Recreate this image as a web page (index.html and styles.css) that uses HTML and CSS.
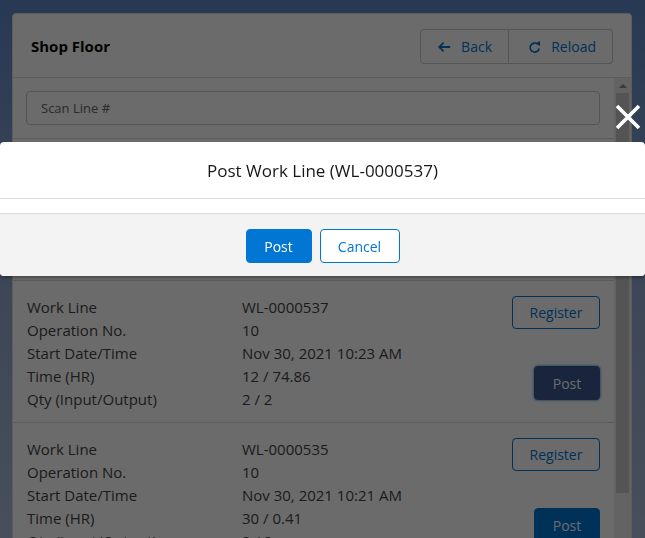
FILE: index.html
```html
<!DOCTYPE html>
<html lang="en">

<head>
    <meta charset="UTF-8">
    <meta name="viewport" content="width=device-width, initial-scale=1.0">
    <title>Shop Floor</title>
    <link rel="stylesheet" href="styles.css">
</head>

<body>
    <div class="page">
        <div class="card">
            <div class="card-header">
                <h2 class="card-title">Shop Floor</h2>
                <div class="btn-group">
                    <button class="btn-neutral btn-back">
                        <svg class="btn-icon" viewBox="0 0 16 16" width="16" height="16">
                            <path d="M15 8H2.5M7.5 3L2.5 8l5 5" />
                        </svg>
                        Back
                    </button>
                    <button class="btn-neutral btn-reload">
                        <svg class="btn-icon" viewBox="0 0 16 16" width="16" height="16">
                            <path d="M11.4 4.3A5.5 5.5 0 1 0 13.5 9.8" />
                            <polygon class="fill" points="8.6,3.9 14.6,0.6 14.6,6.9" />
                        </svg>
                        Reload
                    </button>
                </div>
            </div>

            <div class="card-body">
                <div class="list">
                    <div class="scan">
                        <input type="text" class="scan-input" placeholder="Scan Line #">
                    </div>

                    <!-- Work lines -->
                    <div class="line-item">
                        <dl class="fields">
                            <dt>Work Line</dt><dd>WL-0000538</dd>
                            <dt>Operation No.</dt><dd>10</dd>
                            <dt>Start Date/Time</dt><dd>Nov 30, 2021 10:25 AM</dd>
                            <dt>Time (HR)</dt><dd>4 / 0.12</dd>
                            <dt>Qty (Input/Output)</dt><dd>1 / 1</dd>
                        </dl>
                        <div class="actions">
                            <button class="btn-outline">Register</button>
                            <button class="btn-brand">Post</button>
                        </div>
                    </div>

                    <div class="line-item">
                        <dl class="fields">
                            <dt>Work Line</dt><dd>WL-0000537</dd>
                            <dt>Operation No.</dt><dd>10</dd>
                            <dt>Start Date/Time</dt><dd>Nov 30, 2021 10:23 AM</dd>
                            <dt>Time (HR)</dt><dd>12 / 74.86</dd>
                            <dt>Qty (Input/Output)</dt><dd>2 / 2</dd>
                        </dl>
                        <div class="actions">
                            <button class="btn-outline">Register</button>
                            <button class="btn-brand is-active">Post</button>
                        </div>
                    </div>

                    <div class="line-item">
                        <dl class="fields">
                            <dt>Work Line</dt><dd>WL-0000535</dd>
                            <dt>Operation No.</dt><dd>10</dd>
                            <dt>Start Date/Time</dt><dd>Nov 30, 2021 10:21 AM</dd>
                            <dt>Time (HR)</dt><dd>30 / 0.41</dd>
                            <dt>Qty (Input/Output)</dt><dd>2 / 2</dd>
                        </dl>
                        <div class="actions">
                            <button class="btn-outline">Register</button>
                            <button class="btn-brand">Post</button>
                        </div>
                    </div>
                </div>

                <div class="scrollbar">
                    <span class="scroll-arrow"></span>
                    <span class="scroll-thumb"></span>
                </div>
            </div>
        </div>
    </div>

    <!-- Post confirmation dialog -->
    <div class="backdrop"></div>
    <section class="modal">
        <button class="modal-close" title="Close">
            <svg viewBox="0 0 26 26" width="26" height="26">
                <path d="M2 2L24 24M24 2L2 24" />
            </svg>
        </button>
        <header class="modal-header">
            <h2>Post Work Line (WL-0000537)</h2>
        </header>
        <div class="modal-content"></div>
        <footer class="modal-footer">
            <button class="btn-brand">Post</button>
            <button class="btn-cancel">Cancel</button>
        </footer>
    </section>
</body>

</html>
```

FILE: styles.css
```css
body {
    font-family: "Open Sans", Arial, sans-serif;
    font-size: 14px;
    margin: 0;
    height: 538px;
    overflow: hidden;
    background: linear-gradient(180deg, #5e88c6 0%, #8aa3cc 40%, #adbcd8 100%);
    color: #3e3e3c;
}

button {
    font-family: inherit;
    font-size: 14px;
    cursor: pointer;
}

.page {
    padding: 13px 13px 0 12px;
}

.card {
    background-color: #ffffff;
    border: 1px solid #dddbda;
    border-radius: 4px;
    height: 600px;
}

/* header */
.card-header {
    display: flex;
    justify-content: space-between;
    align-items: center;
    height: 63px;
    padding: 0 18px;
    border-bottom: 1px solid #dddbda;
}

.card-title {
    margin: 0;
    font-size: 15px;
    font-weight: 700;
    color: #080707;
}

.btn-group {
    display: flex;
    margin-top: 2px;
}

.btn-neutral {
    display: flex;
    align-items: center;
    height: 35px;
    background: #ffffff;
    color: #0176d3;
    border: 1px solid #c9c9c9;
    padding: 0 16px;
}

.btn-back {
    width: 89px;
    border-radius: 4px 0 0 4px;
}

.btn-reload {
    width: 104px;
    border-left: none;
    border-radius: 0 4px 4px 0;
    padding-left: 19px;
}

.btn-icon {
    margin-right: 10px;
    fill: none;
    stroke: #0176d3;
    stroke-width: 2;
}

.btn-icon .fill {
    fill: #0176d3;
    stroke: none;
}

/* body + list */
.card-body {
    display: flex;
}

.list {
    flex: 1;
}

.scan {
    padding: 13px 14px 13px 13px;
    border-bottom: 1px solid #dddbda;
}

.scan-input {
    display: block;
    box-sizing: border-box;
    width: 100%;
    height: 34px;
    padding: 0 14px;
    border: 1px solid #c9c9c9;
    border-radius: 4px;
    font-family: inherit;
    font-size: 13px;
}

.scan-input::placeholder {
    color: #666666;
}

.line-item {
    display: flex;
    justify-content: space-between;
    padding: 15px 14px 11px 14px;
    border-bottom: 1px solid #dddbda;
}

.fields {
    display: grid;
    grid-template-columns: 215px auto;
    margin: 0;
    font-size: 15px;
    line-height: 23px;
}

.fields dt,
.fields dd {
    margin: 0;
    color: #444444;
}

.actions {
    display: flex;
    flex-direction: column;
    align-items: flex-end;
}

.btn-outline {
    width: 88px;
    height: 33px;
    background: #ffffff;
    color: #0176d3;
    border: 1px solid #0176d3;
    border-radius: 4px;
}

.btn-brand {
    width: 66px;
    height: 34px;
    background: #0176d3;
    color: #ffffff;
    border: 1px solid #0176d3;
    border-radius: 4px;
}

.actions .btn-brand {
    margin-top: 37px;
}

.btn-brand.is-active {
    background: #3a5890;
    border-color: #3a5890;
    box-shadow: 0 0 3px #0176d3;
}

/* fake scrollbar */
.scrollbar {
    width: 17px;
    height: 460px;
    background: #ebebeb;
    display: flex;
    flex-direction: column;
    align-items: center;
}

.scroll-arrow {
    margin: 6px 0 5px;
    border-left: 4px solid transparent;
    border-right: 4px solid transparent;
    border-bottom: 4px solid #8a8a8a;
}

.scroll-thumb {
    width: 13px;
    height: 400px;
    background: #c8c8c8;
}

/* modal */
.backdrop {
    position: fixed;
    inset: 0;
    background: rgba(0, 0, 0, 0.58);
}

.modal {
    position: absolute;
    top: 142px;
    left: 0;
    right: 0;
    background: #ffffff;
    border-radius: 4px;
    box-shadow: 0 2px 3px rgba(0, 0, 0, 0.3);
}

.modal-close {
    position: absolute;
    top: -38px;
    right: 4px;
    padding: 0;
    background: none;
    border: none;
}

.modal-close svg {
    display: block;
    stroke: #ffffff;
    stroke-width: 3.6;
}

.modal-header {
    height: 56px;
    display: flex;
    align-items: center;
    justify-content: center;
    border-bottom: 1px solid #dddbda;
}

.modal-header h2 {
    margin: 0;
    font-size: 17px;
    font-weight: 400;
    color: #181818;
}

.modal-content {
    height: 14px;
}

.modal-footer {
    display: flex;
    justify-content: center;
    gap: 8px;
    padding: 15px 0 13px;
    background: #f3f3f3;
    border-top: 1px solid #dddbda;
    border-radius: 0 0 4px 4px;
}

.btn-cancel {
    width: 80px;
    height: 34px;
    background: #ffffff;
    color: #0176d3;
    border: 1px solid #0176d3;
    border-radius: 4px;
}
```
